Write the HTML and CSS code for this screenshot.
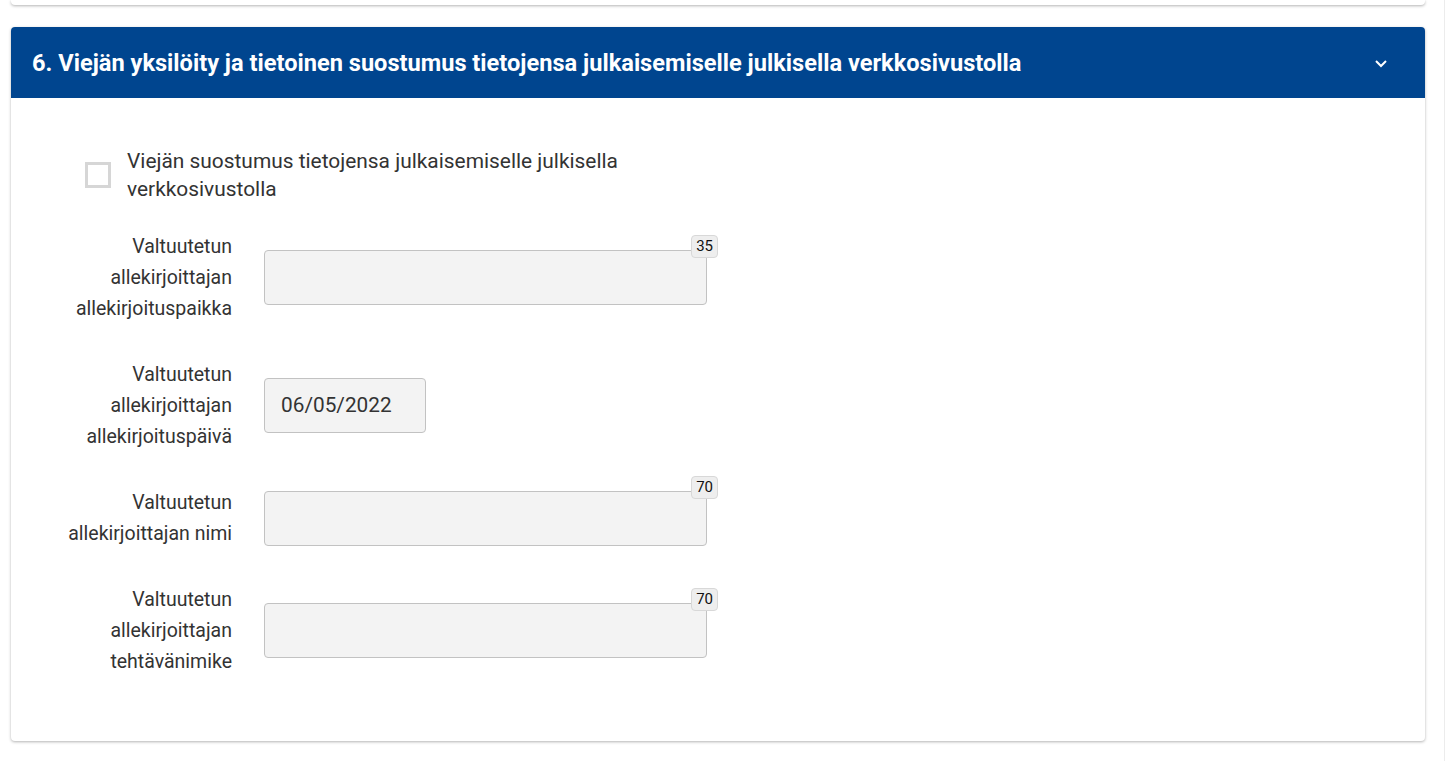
FILE: index.html
```html
<!DOCTYPE html>
<html lang="fi">
<head>
    <meta charset="UTF-8">
    <meta name="viewport" content="width=device-width, initial-scale=1.0">
    <title>Suostumus</title>
    <link rel="stylesheet" href="styles.css">
</head>
<body>
    <div class="page">
        <div class="card card-prev"></div>

        <div class="card">
            <div class="card-header">
                <h2>6. Viejän yksilöity ja tietoinen suostumus tietojensa julkaisemiselle julkisella verkkosivustolla</h2>
                <svg class="chevron" width="14" height="10" viewBox="0 0 14 10">
                    <path d="M2 3 L7 8 L12 3" fill="none" stroke="#fff" stroke-width="2"/>
                </svg>
            </div>

            <div class="card-body">
                <label class="check-row">
                    <span class="checkbox"></span>
                    <span class="check-label">Viejän suostumus tietojensa julkaisemiselle julkisella verkkosivustolla</span>
                </label>

                <div class="form-row">
                    <div class="field-label">Valtuutetun<br>allekirjoittajan<br>allekirjoituspaikka</div>
                    <div class="field">
                        <div class="input"></div>
                        <span class="badge">35</span>
                    </div>
                </div>

                <div class="form-row">
                    <div class="field-label">Valtuutetun<br>allekirjoittajan<br>allekirjoituspäivä</div>
                    <div class="field">
                        <div class="input input-date">06/05/2022</div>
                    </div>
                </div>

                <div class="form-row">
                    <div class="field-label">Valtuutetun<br>allekirjoittajan nimi</div>
                    <div class="field">
                        <div class="input"></div>
                        <span class="badge">70</span>
                    </div>
                </div>

                <div class="form-row">
                    <div class="field-label">Valtuutetun<br>allekirjoittajan<br>tehtävänimike</div>
                    <div class="field">
                        <div class="input"></div>
                        <span class="badge">70</span>
                    </div>
                </div>
            </div>
        </div>
    </div>
</body>
</html>
```

FILE: styles.css
```css
* {
    box-sizing: border-box;
}
body {
    margin: 0;
    background: #fff;
    font-family: Roboto, "Liberation Sans", sans-serif;
    color: #333;
}
.page {
    width: 1445px;
    min-height: 761px;
    padding: 0 19px 0 11px;
    border-right: 1px solid #ececec;
}
.card {
    background: #fff;
    border-radius: 4px;
    box-shadow: 0 1px 3px rgba(0, 0, 0, 0.3);
}
.card-prev {
    height: 5px;
    margin-bottom: 22px;
    border-radius: 0 0 4px 4px;
}
.card-header {
    display: flex;
    align-items: center;
    justify-content: space-between;
    height: 71px;
    padding: 0 37px 0 21px;
    background: #00458f;
    border-radius: 4px 4px 0 0;
}
.card-header h2 {
    margin: 0;
    color: #fff;
    font-size: 23.6px;
    font-weight: 700;
}
.chevron {
    display: block;
}
.card-body {
    padding: 49px 0 64px 0;
}
.check-row {
    display: flex;
    align-items: center;
    gap: 16px;
    padding-left: 74px;
    margin-bottom: 28px;
}
.checkbox {
    width: 26px;
    height: 26px;
    border: 3px solid #d6d6d6;
    flex-shrink: 0;
}
.check-label {
    max-width: 560px;
    font-size: 20.9px;
    line-height: 28px;
}
.form-row {
    display: flex;
    align-items: center;
    gap: 32px;
    margin-bottom: 35px;
}
.form-row:last-child {
    margin-bottom: 0;
}
.field-label {
    width: 221px;
    text-align: right;
    font-size: 19.5px;
    line-height: 31px;
}
.field {
    position: relative;
}
.input {
    width: 443px;
    height: 55px;
    background: #f3f3f3;
    border: 1px solid #c2c2c2;
    border-radius: 4px;
}
.input-date {
    width: 162px;
    padding: 0 16px;
    font-size: 20.8px;
    line-height: 53px;
    color: #333;
}
.badge {
    position: absolute;
    top: -15px;
    right: -11px;
    height: 23px;
    padding: 0 4px;
    background: #eee;
    border: 1px solid #d8d8d8;
    border-radius: 4px;
    font-size: 15px;
    line-height: 21px;
    color: #111;
}
```
